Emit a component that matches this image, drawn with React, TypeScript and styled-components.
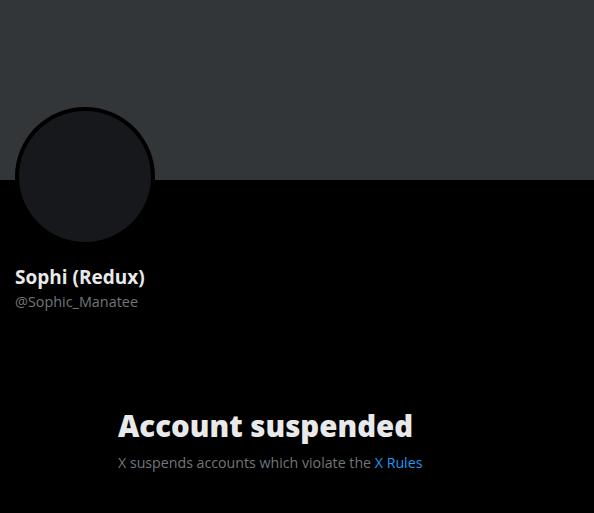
import React from "react";
import styled, { createGlobalStyle } from "styled-components";

const Global = createGlobalStyle`
  html, body { margin: 0; padding: 0; background: #000; }
  body { font-family: "Open Sans", "Noto Sans", sans-serif; -webkit-font-smoothing: antialiased; }
`;

const Page = styled.div`
  width: 594px;
  height: 513px;
  background: #000;
  overflow: hidden;
`;

const Banner = styled.div`
  height: 180px;
  background: #333639;
`;

const Profile = styled.div`
  padding: 0 15px;
  display: flex;
  flex-direction: column;
`;

const Avatar = styled.div`
  width: 140px;
  height: 139px;
  margin-top: -73px;
  box-sizing: border-box;
  border: 4px solid #000;
  border-radius: 50%;
  background: #16181c;
`;

const Name = styled.div`
  margin-top: 19px;
  font-size: 19px;
  line-height: 24px;
  font-weight: 700;
  color: #e7e9ea;
`;

const Handle = styled.div`
  margin-top: 3px;
  font-size: 14.4px;
  line-height: 20px;
  color: #71767b;
`;

const Empty = styled.div`
  margin: 96px 0 0 118px;
  display: flex;
  flex-direction: column;
  gap: 9px;
`;

const Heading = styled.div`
  font-size: 29.4px;
  line-height: 36px;
  font-weight: 800;
  color: #e7e9ea;
`;

const Sub = styled.div`
  font-size: 14.2px;
  line-height: 20px;
  color: #71767b;
`;

const RulesLink = styled.a`
  color: #1d9bf0;
  text-decoration: none;
`;

export default function App() {
  return (
    <Page>
      <Global />
      <Banner />
      <Profile>
        <Avatar />
        <Name>Sophi (Redux)</Name>
        <Handle>@Sophic_Manatee</Handle>
      </Profile>
      <Empty>
        <Heading>Account suspended</Heading>
        <Sub>
          X suspends accounts which violate the <RulesLink href="#">X Rules</RulesLink>
        </Sub>
      </Empty>
    </Page>
  );
}
